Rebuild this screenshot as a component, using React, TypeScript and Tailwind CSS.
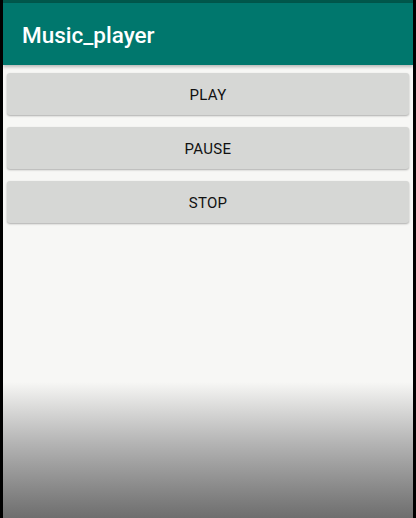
import React from "react";

const buttons = ["PLAY", "PAUSE", "STOP"];

const App = () => {
  return (
    <div className="w-[416px] h-[518px] bg-black px-[3px] overflow-hidden">
      <div
        className="flex flex-col h-full bg-[#f7f7f5]"
        style={{ fontFamily: "Roboto, 'Noto Sans', sans-serif" }}
      >
        <div className="h-[3px] bg-[#00574b]" />
        <div className="h-[62px] bg-[#00776d] flex items-center pl-[19px] pt-[2px] shadow-[0_2px_3px_rgba(0,0,0,0.25)] relative z-10">
          <span className="text-white text-[22.5px] font-medium leading-none">Music_player</span>
        </div>

        <div className="flex flex-col gap-[12px] px-[4px] pt-[8px]">
          {buttons.map((label) => (
            <button
              key={label}
              className="h-[42px] w-full rounded-[3px] bg-[#d6d7d5] text-[15px] font-normal text-[#111] tracking-[0.3px] pt-[3px] shadow-[0_1px_2px_rgba(0,0,0,0.3)]"
            >
              {label}
            </button>
          ))}
        </div>

        <div className="flex-1" />
        <div className="h-[136px] bg-gradient-to-b from-[#f7f7f5] via-[#b4b4b4] via-45% to-[#6e6e6e]" />
      </div>
    </div>
  );
};

export default App;
